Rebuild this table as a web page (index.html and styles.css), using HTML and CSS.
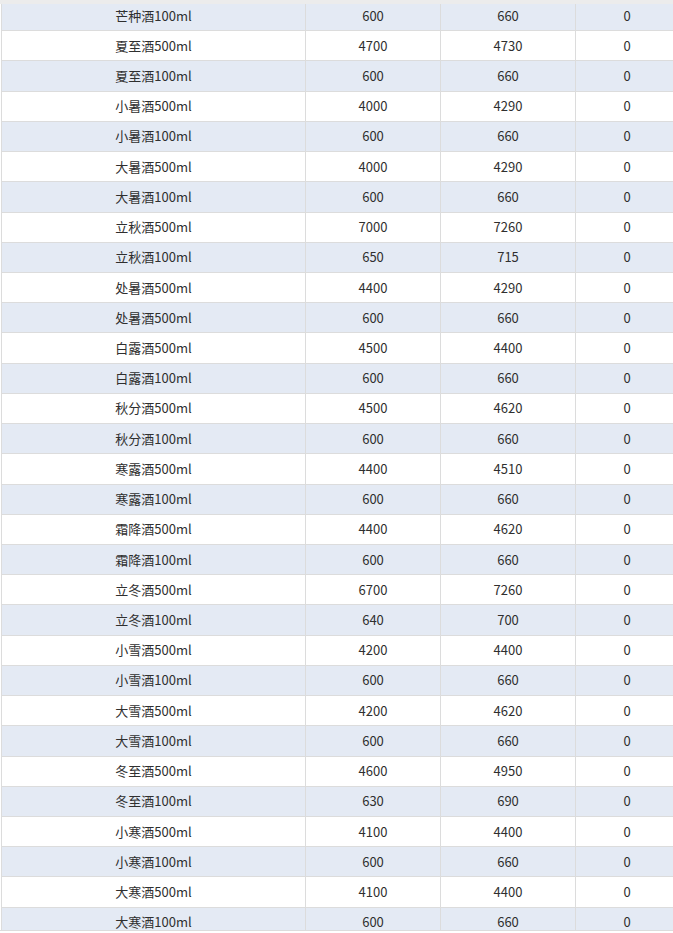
FILE: index.html
```html
<!DOCTYPE html>
<html lang="zh">
<head>
<meta charset="utf-8">
<link rel="stylesheet" href="styles.css">
</head>
<body>
<div class="topbar"></div>
<div class="wrap">
<table class="grid">
<colgroup><col class="c1"><col class="c2"><col class="c3"><col class="c4"></colgroup>
<tbody>
<tr class="alt"><td>芒种酒100ml</td><td>600</td><td>660</td><td>0</td></tr>
<tr><td>夏至酒500ml</td><td>4700</td><td>4730</td><td>0</td></tr>
<tr class="alt"><td>夏至酒100ml</td><td>600</td><td>660</td><td>0</td></tr>
<tr><td>小暑酒500ml</td><td>4000</td><td>4290</td><td>0</td></tr>
<tr class="alt"><td>小暑酒100ml</td><td>600</td><td>660</td><td>0</td></tr>
<tr><td>大暑酒500ml</td><td>4000</td><td>4290</td><td>0</td></tr>
<tr class="alt"><td>大暑酒100ml</td><td>600</td><td>660</td><td>0</td></tr>
<tr><td>立秋酒500ml</td><td>7000</td><td>7260</td><td>0</td></tr>
<tr class="alt"><td>立秋酒100ml</td><td>650</td><td>715</td><td>0</td></tr>
<tr><td>处暑酒500ml</td><td>4400</td><td>4290</td><td>0</td></tr>
<tr class="alt"><td>处暑酒500ml</td><td>600</td><td>660</td><td>0</td></tr>
<tr><td>白露酒500ml</td><td>4500</td><td>4400</td><td>0</td></tr>
<tr class="alt"><td>白露酒100ml</td><td>600</td><td>660</td><td>0</td></tr>
<tr><td>秋分酒500ml</td><td>4500</td><td>4620</td><td>0</td></tr>
<tr class="alt"><td>秋分酒100ml</td><td>600</td><td>660</td><td>0</td></tr>
<tr><td>寒露酒500ml</td><td>4400</td><td>4510</td><td>0</td></tr>
<tr class="alt"><td>寒露酒100ml</td><td>600</td><td>660</td><td>0</td></tr>
<tr><td>霜降酒500ml</td><td>4400</td><td>4620</td><td>0</td></tr>
<tr class="alt"><td>霜降酒100ml</td><td>600</td><td>660</td><td>0</td></tr>
<tr><td>立冬酒500ml</td><td>6700</td><td>7260</td><td>0</td></tr>
<tr class="alt"><td>立冬酒100ml</td><td>640</td><td>700</td><td>0</td></tr>
<tr><td>小雪酒500ml</td><td>4200</td><td>4400</td><td>0</td></tr>
<tr class="alt"><td>小雪酒100ml</td><td>600</td><td>660</td><td>0</td></tr>
<tr><td>大雪酒500ml</td><td>4200</td><td>4620</td><td>0</td></tr>
<tr class="alt"><td>大雪酒100ml</td><td>600</td><td>660</td><td>0</td></tr>
<tr><td>冬至酒500ml</td><td>4600</td><td>4950</td><td>0</td></tr>
<tr class="alt"><td>冬至酒100ml</td><td>630</td><td>690</td><td>0</td></tr>
<tr><td>小寒酒500ml</td><td>4100</td><td>4400</td><td>0</td></tr>
<tr class="alt"><td>小寒酒100ml</td><td>600</td><td>660</td><td>0</td></tr>
<tr><td>大寒酒500ml</td><td>4100</td><td>4400</td><td>0</td></tr>
<tr class="alt"><td>大寒酒100ml</td><td>600</td><td>660</td><td>0</td></tr>
</tbody>
</table>
</div>
</body>
</html>
```
FILE: styles.css
```css
html, body {
  margin: 0;
  padding: 0;
  background: #ffffff;
  overflow: hidden;
}
body {
  width: 673px;
  height: 933px;
  font-family: "Microsoft YaHei", "Noto Sans CJK SC", "Noto Sans", sans-serif;
  font-size: 13px;
  color: #2f2f2f;
}
.topbar {
  height: 4px;
  background: #ececec;
  position: relative;
  z-index: 1;
}
.wrap {
  height: 929px;
  margin-top: -4px;
  padding-top: 1px;
  padding-left: 1px;
  overflow: hidden;
  border-bottom: 1px solid #dcdcdc;
}
.grid {
  table-layout: fixed;
  border-collapse: separate;
  border-spacing: 0;
  width: 678px;
  border-left: 1px solid #dcdcdc;
}
.c1 { width: 304px; }
.c2 { width: 135px; }
.c3 { width: 135px; }
.c4 { width: 103px; }
.grid td {
  box-sizing: border-box;
  height: 30.2px;
  padding: 0;
  text-align: center;
  vertical-align: middle;
  border-right: 1px solid #dcdcdc;
  border-bottom: 1px solid #dcdcdc;
  white-space: nowrap;
  line-height: 18px;
}
.grid tr:nth-child(3n) td {
  height: 30.3px;
}
.grid tr.alt td {
  background: #e4eaf4;
}
```
